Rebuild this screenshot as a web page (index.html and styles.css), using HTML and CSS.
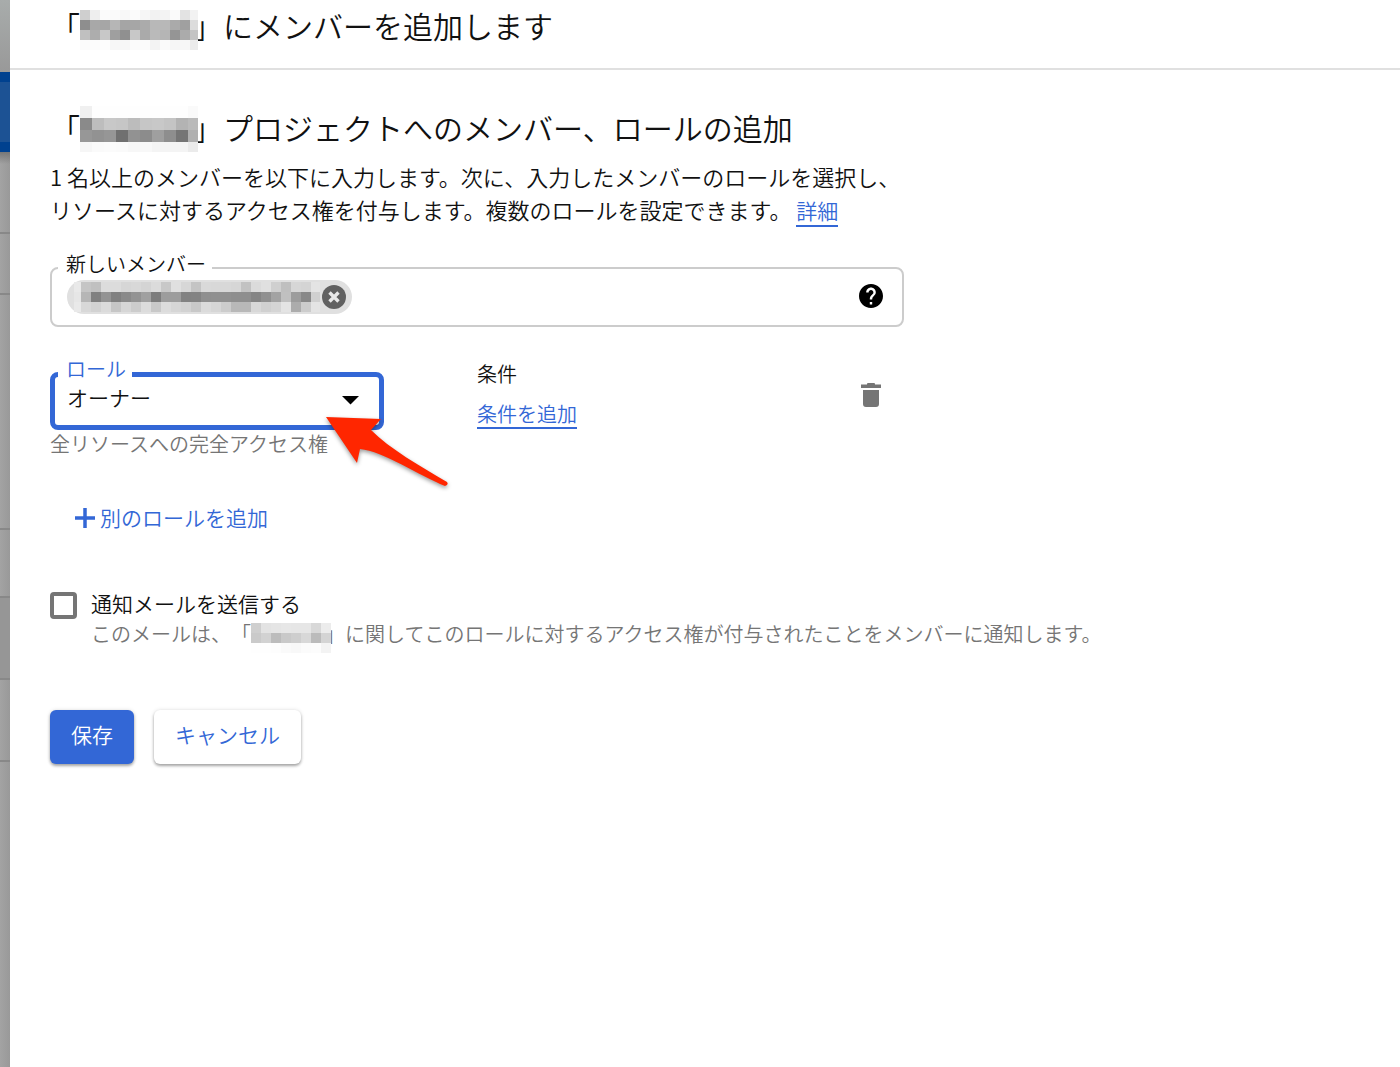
FILE: index.html
```html
<!DOCTYPE html>
<html lang="ja">
<head>
<meta charset="utf-8">
<meta name="viewport" content="width=device-width, initial-scale=1">
<title>メンバーを追加</title>
<link rel="stylesheet" href="styles.css">
</head>
<body>
<div class="page">
  <div class="backdrop" aria-hidden="true">
    <div class="backdrop-top"></div>
    <div class="backdrop-bar"></div>
    <div class="backdrop-row backdrop-row-shadow"></div>
    <div class="backdrop-row backdrop-row-short"></div>
    <div class="backdrop-row backdrop-row-tall"></div>
    <div class="backdrop-row backdrop-row-mid"></div>
    <div class="backdrop-row backdrop-row-active"></div>
    <div class="backdrop-row"></div>
  </div>
  <div class="panel">
    <header class="panel-header">
      <h1 class="heading">「<span class="redacted redacted-heading"><svg class="mosaic" data-mosaic="title" width="118" height="40"></svg></span>」にメンバーを追加します</h1>
    </header>
    <main class="content">
      <h2 class="heading">「<span class="redacted redacted-heading"><svg class="mosaic" data-mosaic="project" width="118" height="46"></svg></span>」プロジェクトへのメンバー、ロールの追加</h2>
      <p class="intro">1 名以上のメンバーを以下に入力します。次に、入力したメンバーのロールを選択し、<br>リソースに対するアクセス権を付与します。複数のロールを設定できます。 <a class="link" href="#details">詳細</a></p>

      <form class="form">
        <div class="field member-field">
          <label class="field-label" for="member">新しいメンバー</label>
          <span class="chip">
            <svg class="chip-mosaic" data-mosaic="member" width="246" height="30" viewBox="3 0 246 30"></svg>
            <button class="icon-button" type="button" aria-label="削除">
              <svg width="24" height="24" viewBox="0 0 24 24"><circle cx="12" cy="12" r="12" fill="#616161"/><path d="M7.500 7.500l9 9M16.500 7.500l-9 9" stroke="#e8e8e8" stroke-width="3.400"/></svg>
            </button>
          </span>
          <input class="member-input" id="member" type="text">
          <button class="icon-button help" type="button" aria-label="ヘルプ">
            <svg width="24" height="24" viewBox="2 2 20 20"><path d="M12 2C6.480 2 2 6.480 2 12s4.480 10 10 10 10-4.480 10-10S17.520 2 12 2zm1 17h-2v-2h2v2zm2.070-7.750l-.9.920C13.450 12.900 13 13.500 13 15h-2v-.5c0-1.100.45-2.100 1.170-2.830l1.240-1.260c.37-.36.590-.86.590-1.410 0-1.100-.9-2-2-2s-2 .9-2 2H8c0-2.210 1.790-4 4-4s4 1.790 4 4c0 .88-.36 1.680-.93 2.250z"/></svg>
          </button>
        </div>

        <div class="role-row">
          <div class="role">
            <div class="field role-field">
              <label class="field-label" for="role">ロール</label>
              <select class="role-select" id="role"><option>オーナー</option></select>
              <svg class="caret" width="17" height="9" viewBox="0 0 17 9"><path d="M0 0h17L8.500 8.500z"/></svg>
              <svg class="pointer" width="130" height="82" viewBox="0 0 130 82"><path d="M4 5L59 7L49 18C68 37 98 54 125 70Q127 73 123 74C98 64 61 39 38 37L35 51z" fill="#ff2600"/></svg>
            </div>
            <p class="hint">全リソースへの完全アクセス権</p>
          </div>
          <div class="condition">
            <span class="condition-title">条件</span>
            <a class="link" href="#condition">条件を追加</a>
          </div>
          <button class="icon-button trash" type="button" aria-label="ロールを削除">
            <svg width="20" height="24" viewBox="0 0 20 24" fill="#757575"><path d="M0 1.500h6V1q0-1 1-1h6q1 0 1 1v.5h6v3.500H0zM2 7h16v14q0 3-3 3H5q-3 0-3-3z"/></svg>
          </button>
        </div>

        <button class="add-role" type="button">
          <svg width="20" height="20" viewBox="0 0 20 20"><path d="M10 0v20M0 10h20" stroke="#3367d6" stroke-width="3.500"/></svg>
          <span>別のロールを追加</span>
        </button>

        <div class="notify">
          <input class="checkbox" id="notify" type="checkbox">
          <div class="notify-text">
            <label class="notify-label" for="notify">通知メールを送信する</label>
            <p class="hint">このメールは、「<span class="redacted redacted-hint"><svg class="mosaic" data-mosaic="mail" width="80" height="31"></svg></span>」に関してこのロールに対するアクセス権が付与されたことをメンバーに通知します。</p>
          </div>
        </div>

        <div class="actions">
          <button class="button button-primary" type="submit">保存</button>
          <button class="button" type="button">キャンセル</button>
        </div>
      </form>
    </main>
  </div>
</div>
<script src="mosaic.js"></script>
</body>
</html>
```
FILE: styles.css
```css
* {
  box-sizing: border-box;
}

body {
  margin: 0;
  background: #fff;
  color: #111;
  font-family: "Noto Sans CJK JP", "Noto Sans", sans-serif;
  font-size: 21px;
  font-weight: 350;
  text-spacing-trim: space-all;
}

h1, h2, p {
  margin: 0;
}

button, input, select {
  font: inherit;
  color: inherit;
}

.page {
  display: flex;
  min-height: 100vh;
}

/* Strip of the dimmed console behind the panel */
.backdrop {
  flex: none;
  display: flex;
  flex-direction: column;
  width: 10px;
  background: linear-gradient(to right, #a3a3a3, #999);
}

.backdrop-top {
  height: 72px;
  background: linear-gradient(#a8acab, #999);
}

.backdrop-bar {
  height: 80px;
  background: #1c5294;
  border: solid #00418f;
  border-width: 10px 0;
}

.backdrop-row {
  height: 82px;
  border-bottom: 2px solid #888;
}

.backdrop-row-shadow {
  background: linear-gradient(#777, transparent 12px);
}

.backdrop-row-short {
  height: 61px;
}

.backdrop-row-tall {
  height: 235px;
}

.backdrop-row-mid {
  height: 68px;
}

.backdrop-row-active {
  background: #969696;
}

.panel {
  flex: 1;
  min-width: 0;
}

.panel-header {
  padding: 3px 40px 21px;
  border-bottom: 2px solid #e0e0e0;
}

.content {
  padding: 35px 40px 48px;
}

.heading {
  font-size: 30px;
  font-weight: 350;
  line-height: 44px;
}

/* Pixelated names */
.redacted {
  position: relative;
  display: inline-block;
  height: 20px;
}

.redacted-heading {
  width: 113px;
}

.redacted-hint {
  width: 74px;
}

.mosaic {
  position: absolute;
  left: 0;
  bottom: -12px;
}

.intro {
  margin-top: 11px;
  font-size: 22px;
  line-height: 33px;
}

.link {
  color: #3367d6;
  text-decoration: none;
  border-bottom: 2px solid #3367d6;
}

.intro .link {
  font-size: 21px;
}

.field {
  position: relative;
  display: flex;
  align-items: center;
  border: 2px solid #ccc;
  border-radius: 8px;
}

.field-label {
  position: absolute;
  left: 6px;
  top: -19px;
  padding: 0 6px 0 8px;
  background: #fff;
  font-size: 20px;
  line-height: 28px;
}

.member-field {
  max-width: 854px;
  height: 60px;
  margin-top: 40px;
  padding: 0 19px 0 15px;
}

.chip {
  display: flex;
  align-items: center;
  justify-content: space-between;
  height: 34px;
  padding: 0 6px 0 7px;
  border-radius: 17px;
  background: #e0e0e0;
}

.chip-mosaic {
  margin-right: 2px;
}

.member-input {
  flex: 1;
  min-width: 0;
  border: 0;
  outline: 0;
  background: none;
}

.icon-button {
  display: flex;
  padding: 0;
  border: 0;
  background: none;
}

.help {
  padding-bottom: 3px;
}

.role-row {
  display: flex;
  align-items: flex-start;
  max-width: 854px;
  margin-top: 45px;
  padding-right: 23px;
}

.role {
  width: 334px;
}

.role-field {
  height: 58px;
  border: 5px solid #3367d6;
}

.role-field .field-label {
  left: 3px;
  top: -22px;
  color: #3367d6;
}

.role-select {
  width: 100%;
  height: 48px;
  padding: 0 12px 8px;
  border: 0;
  outline: 0;
  appearance: none;
  background: none;
}

.caret {
  position: absolute;
  right: 20px;
  top: 19px;
  pointer-events: none;
}

.pointer {
  position: absolute;
  left: 267px;
  top: 35px;
  z-index: 1;
  pointer-events: none;
  filter: drop-shadow(0 2px 2px rgba(0, 0, 0, 0.4));
}

.hint {
  color: #757575;
  font-size: 20px;
  line-height: 28px;
}

.condition {
  flex: 1;
  display: flex;
  flex-direction: column;
  align-items: flex-start;
  gap: 12px;
  margin-left: 93px;
  margin-top: -12px;
  font-size: 20px;
  line-height: 28px;
}

.condition .link {
  line-height: 27px;
}

.trash {
  margin-top: 11px;
}

.add-role {
  display: flex;
  align-items: center;
  gap: 5px;
  margin-top: 43px;
  padding: 0 25px;
  border: 0;
  background: none;
  color: #3367d6;
  line-height: 32px;
}

.add-role span {
  padding-bottom: 2px;
}

.notify {
  display: flex;
  align-items: flex-start;
  gap: 14px;
  margin-top: 52px;
}

.checkbox {
  flex: none;
  appearance: none;
  width: 27px;
  height: 27px;
  margin: 5px 0 0;
  border: 4px solid #757575;
  border-radius: 4px;
}

.notify-label {
  display: block;
  line-height: 32px;
}

.notify .hint {
  margin-top: 1px;
}

.actions {
  display: flex;
  gap: 20px;
  margin-top: 62px;
}

.button {
  height: 54px;
  padding: 0 21px 6px;
  border: 0;
  border-radius: 6px;
  background: #fff;
  color: #3367d6;
  box-shadow: 0 2px 3px rgba(0, 0, 0, 0.32), 0 0 4px rgba(0, 0, 0, 0.12);
}

.button-primary {
  background: #3367d6;
  color: #fff;
}
```
FILE: mosaic.js
```js
// Grey levels (hex) of the pixelated names, one string per row of cells.
const mosaics = {
  title: { cell: [10, 10], rows: [
    "cf ee fb fa f8 fb f6 f2 f3 fa e3 f2",
    "8e a8 a6 b6 a5 a6 ab b8 b8 aa a0 dc",
    "c0 ad c8 9f 90 c8 aa ba b5 95 ab c4",
    "fb fc fd f7 f7 fb fb f3 fa f6 f7 eb"] },
  project: { cell: [12, 12], rows: [
    "f0 fe fe fe fe fe fe fe fe fa",
    "8a bd c8 c6 bc c6 c8 c4 b3 ba",
    "97 92 96 70 92 8c 9f 8e 75 b0",
    "f6 fa fb fa f7 f8 f4 f4 f4 eb"] },
  member: { cell: [10, 10], rows: [
    "e9 c5 c0 dc dc d6 d8 d4 db c8 e0 d7 c4 d9 d8 d8 d6 c2 db e0 cf bf d6 d4 e4",
    "e6 b6 80 93 80 8a 93 a0 7c 9d 9d 82 83 8f 90 90 8e 8e 85 90 a3 c0 9c 88 d0",
    "e9 d8 d2 db c6 d6 cc dc c8 dc d6 d2 c8 db d6 cc b8 b8 d8 d0 d5 e4 ac cc e4"] },
  mail: { cell: [10, 10], rows: [
    "cf e3 e5 e7 e6 e6 d8 ec",
    "ca d2 bc c9 ce d8 bb d4",
    "fe fe fd fa f8 fb fc f3"] }
};

document.querySelectorAll("[data-mosaic]").forEach((svg) => {
  const { cell: [w, h], rows } = mosaics[svg.dataset.mosaic];
  rows.forEach((row, y) => row.split(" ").forEach((level, x) => {
    const rect = document.createElementNS("http://www.w3.org/2000/svg", "rect");
    rect.setAttribute("x", x * w);
    rect.setAttribute("y", y * h);
    rect.setAttribute("width", w);
    rect.setAttribute("height", h);
    rect.setAttribute("fill", "#" + level.repeat(3));
    svg.appendChild(rect);
  }));
});
```
